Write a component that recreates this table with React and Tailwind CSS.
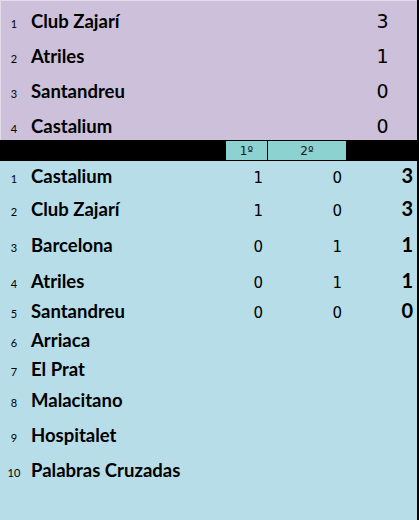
const finalStandings = [
  { pos: 1, name: 'Club Zajarí', score: 3 },
  { pos: 2, name: 'Atriles', score: 1 },
  { pos: 3, name: 'Santandreu', score: 0 },
  { pos: 4, name: 'Castalium', score: 0 },
];

// heights follow the uneven spreadsheet rows of the screenshot
const league = [
  { pos: 1, name: 'Castalium', r1: 1, r2: 0, pts: 3, h: 'h-[30px]' },
  { pos: 2, name: 'Club Zajarí', r1: 1, r2: 0, pts: 3, h: 'h-[37px]' },
  { pos: 3, name: 'Barcelona', r1: 0, r2: 1, pts: 1, h: 'h-[35px]' },
  { pos: 4, name: 'Atriles', r1: 0, r2: 1, pts: 1, h: 'h-[36px]' },
  { pos: 5, name: 'Santandreu', r1: 0, r2: 0, pts: 0, h: 'h-[24px]' },
  { pos: 6, name: 'Arriaca', h: 'h-[34px]' },
  { pos: 7, name: 'El Prat', h: 'h-[24px]' },
  { pos: 8, name: 'Malacitano', h: 'h-[39px]' },
  { pos: 9, name: 'Hospitalet', h: 'h-[31px]' },
  { pos: 10, name: 'Palabras Cruzadas', h: 'h-[38px]' },
];

const lato = { fontFamily: 'Lato, "Liberation Sans", sans-serif' };
const dejavu = { fontFamily: '"DejaVu Sans", "Liberation Sans", sans-serif' };

function Pos({ n }) {
  return (
    <span className="w-[28px] shrink-0 text-center text-[11px] leading-none text-black" style={lato}>
      {n}
    </span>
  );
}

function Name({ children }) {
  return (
    <span className="flex-1 pl-[3px] text-[18.5px] font-bold leading-none text-black" style={lato}>
      {children}
    </span>
  );
}

export default function App() {
  return (
    <div className="flex h-[520px] w-[419px] flex-col border-r-2 border-black bg-[#b7dde8]">
      {/* final ranking */}
      <div className="flex flex-col bg-[#ccc0da] shadow-[inset_1px_1px_0_#e2dde8]">
        {finalStandings.map((t) => (
          <div key={t.pos} className="flex h-[35px] items-center pt-[7px]">
            <div className="flex w-full items-baseline">
              <Pos n={t.pos} />
              <Name>{t.name}</Name>
              <span className="w-[69px] text-center text-[19px] leading-none text-black" style={dejavu}>
                {t.score}
              </span>
            </div>
          </div>
        ))}
      </div>

      {/* header bar */}
      <div className="flex h-[21px] shrink-0 bg-black py-[1px]">
        <div className="w-[226px]" />
        <div className="flex w-[41px] items-center justify-center bg-[#8cd2d0] text-[12px] text-[#1a1a1a]" style={dejavu}>
          1º
        </div>
        <div className="w-[1px]" />
        <div className="flex w-[78px] items-center justify-center bg-[#8cd2d0] text-[12px] text-[#1a1a1a]" style={dejavu}>
          2º
        </div>
      </div>

      {/* league table */}
      <div className="flex flex-col">
        {league.map((t) => (
          <div key={t.pos} className={`flex items-center pb-[2px] ${t.h}`}>
            <div className="flex w-full items-baseline">
              <Pos n={t.pos} />
              <Name>{t.name}</Name>
              <span className="w-[41px] pr-[4px] text-right text-[15px] leading-none text-black" style={dejavu}>
                {t.r1 ?? '\u00a0'}
              </span>
              <span className="ml-[1px] w-[78px] pr-[4px] text-right text-[15px] leading-none text-black" style={dejavu}>
                {t.r2 ?? '\u00a0'}
              </span>
              <span className="w-[71px] pr-[4px] text-right text-[20px] font-bold leading-none text-black" style={lato}>
                {t.pts ?? '\u00a0'}
              </span>
            </div>
          </div>
        ))}
      </div>
    </div>
  );
}
